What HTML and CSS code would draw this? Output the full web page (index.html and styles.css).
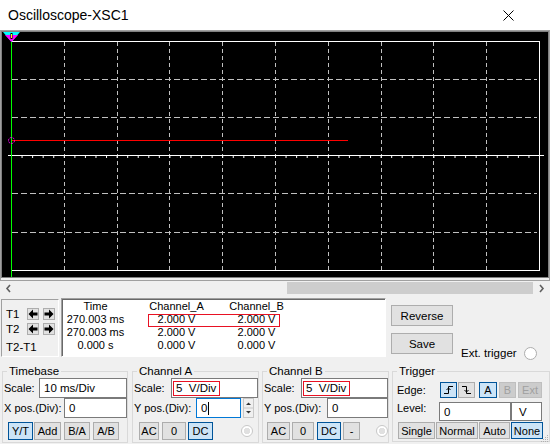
FILE: index.html
```html
<!DOCTYPE html>
<html>
<head>
<meta charset="utf-8">
<title>Oscilloscope-XSC1</title>
<link rel="stylesheet" href="styles.css">
</head>
<body>
<div class="titlebar">
  <span class="title">Oscilloscope-XSC1</span>
  <svg class="close" width="11" height="11" viewBox="0 0 11 11"><path d="M0.5 0.5L10.5 10.5M10.5 0.5L0.5 10.5" stroke="#000" stroke-width="1"/></svg>
</div>

<svg class="scope" viewBox="0 30 550 252" width="550" height="252">
  <rect x="0" y="30" width="550" height="252" fill="#f0f0f0"/>
  <rect x="0.5" y="30.5" width="549" height="250" fill="none" stroke="#a0a0a0"/>
  <rect x="1.5" y="31.5" width="547" height="246" fill="none" stroke="#808080"/>
  <rect x="2" y="32" width="546" height="245" fill="#000"/>
  <path d="M64.5 42V270M117.5 42V270M169.5 42V270M222.5 42V270M275.5 42V270M328.5 42V270M381.5 42V270M433.5 42V270M486.5 42V270" stroke="#c0c0c0" stroke-dasharray="4 3"/>
  <path d="M12 79.5H537M12 117.5H537M12 193.5H537M12 232.5H537" stroke="#c0c0c0" stroke-dasharray="6 3"/>
  <path d="M11 41.5H540M539.5 41V271M11 270.5H540M8 155.5H544" stroke="#fff"/>
  <line x1="11" y1="157" x2="540" y2="157" stroke="#fff" stroke-width="2" stroke-dasharray="1 9.56"/>
  <path d="M11 140.5H348" stroke="#ff0000"/>
  <path d="M11.5 32V277" stroke="#00ff00"/>
  <circle cx="11.5" cy="140.5" r="3" fill="none" stroke="#ff00ff" stroke-dasharray="2 1"/>
  <polygon points="3,32 20,32 11.5,42" fill="#00ffff"/>
  <polygon points="5,35 18,35 11.5,42" fill="#ff00ff"/>
  <rect x="10.5" y="33" width="2" height="6" fill="#000"/>
  <rect x="11" y="34" width="1" height="4" fill="#ffff00"/>
</svg>

<div class="hscroll">
  <div class="sarrow"><svg width="7" height="9" viewBox="0 0 7 9"><path d="M5 1L2 4.5L5 8" fill="none" stroke="#606060" stroke-width="1.6"/></svg></div>
  <div class="strack"></div>
  <div class="sthumb"></div>
  <div class="sarrow"><svg width="7" height="9" viewBox="0 0 7 9"><path d="M2 1L5 4.5L2 8" fill="none" stroke="#606060" stroke-width="1.6"/></svg></div>
</div>

<div class="readout">
  <div class="tbox">
    <div class="trow">
      <span class="tlab">T1</span>
      <div class="abtn"><svg width="10" height="10" viewBox="0 0 10 10"><path d="M0.5 5L5 0.5V3.5H9.5V6.5H5V9.5Z" fill="#000"/></svg></div>
      <div class="abtn"><svg width="10" height="10" viewBox="0 0 10 10"><path d="M9.5 5L5 0.5V3.5H0.5V6.5H5V9.5Z" fill="#000"/></svg></div>
    </div>
    <div class="trow">
      <span class="tlab">T2</span>
      <div class="abtn"><svg width="10" height="10" viewBox="0 0 10 10"><path d="M0.5 5L5 0.5V3.5H9.5V6.5H5V9.5Z" fill="#000"/></svg></div>
      <div class="abtn"><svg width="10" height="10" viewBox="0 0 10 10"><path d="M9.5 5L5 0.5V3.5H0.5V6.5H5V9.5Z" fill="#000"/></svg></div>
    </div>
    <div class="tdiff">T2-T1</div>
  </div>

  <div class="readtable">
    <div class="rrow"><span class="c1">Time</span><span class="c2">Channel_A</span><span class="c3">Channel_B</span></div>
    <div class="rrow"><span class="c1">270.003 ms</span><span class="c2">2.000 V</span><span class="c3">2.000 V</span></div>
    <div class="rrow"><span class="c1">270.003 ms</span><span class="c2">2.000 V</span><span class="c3">2.000 V</span></div>
    <div class="rrow"><span class="c1">0.000 s</span><span class="c2">0.000 V</span><span class="c3">0.000 V</span></div>
    <div class="hl"></div>
  </div>

  <div class="btncol">
    <div class="btn bigbtn">Reverse</div>
    <div class="btn bigbtn save">Save</div>
  </div>

  <div class="ext"><span>Ext. trigger</span><span class="radio ext-radio"></span></div>
</div>

<div class="groups">
  <fieldset class="grp g-time">
    <legend>Timebase</legend>
    <div class="frow r1"><span class="lab">Scale:</span><div class="inp w88 auto">10 ms/Div</div></div>
    <div class="frow r2"><span class="lab">X pos.(Div):</span><div class="inp w63 auto">0</div></div>
    <div class="frow r3 pl5">
      <div class="btn sel w25">Y/T</div>
      <div class="btn w27 ml1">Add</div>
      <div class="btn w26 ml3">B/A</div>
      <div class="btn w26 ml3">A/B</div>
    </div>
  </fieldset>

  <fieldset class="grp g-cha">
    <legend>Channel A</legend>
    <div class="frow r1"><span class="lab">Scale:</span><div class="inp w87 auto"><span class="redbox">5  V/Div</span></div></div>
    <div class="frow r2"><span class="lab lw63">Y pos.(Div):</span><div class="inp w45 focus">0<span class="caret"></span></div>
      <div class="spin"><svg width="11" height="20" viewBox="0 0 11 20"><rect x="0.5" y="0.5" width="10" height="19" fill="#f0f0f0" stroke="#c8c8c8"/><path d="M1 10H10" stroke="#c8c8c8"/><path d="M3 7H8L5.5 4.5Z" fill="#333"/><path d="M3 13H8L5.5 15.5Z" fill="#333"/></svg></div>
    </div>
    <div class="frow r3 pl6">
      <div class="btn w20">AC</div>
      <div class="btn w24 ml3">0</div>
      <div class="btn sel w25 ml2">DC</div>
      <span class="radio dis ml28"></span>
    </div>
  </fieldset>

  <fieldset class="grp g-chb">
    <legend>Channel B</legend>
    <div class="frow r1"><span class="lab">Scale:</span><div class="inp w87 auto"><span class="redbox">5  V/Div</span></div></div>
    <div class="frow r2"><span class="lab">Y pos.(Div):</span><div class="inp w61 auto">0</div></div>
    <div class="frow r3 pl4">
      <div class="btn w23">AC</div>
      <div class="btn w22 ml2">0</div>
      <div class="btn sel w24 ml3">DC</div>
      <div class="btn w17 ml2">-</div>
      <span class="radio dis ml16"></span>
    </div>
  </fieldset>

  <fieldset class="grp g-trig">
    <legend>Trigger</legend>
    <div class="frow t1"><span class="lab tlw">Edge:</span>
      <div class="btn sel w17 eb"><svg width="11" height="10" viewBox="0 0 11 10"><path d="M1 8.5H5.5V1.5H10" fill="none" stroke="#000"/><path d="M3.5 5L5.5 3L7.5 5" fill="none" stroke="#000"/></svg></div>
      <div class="btn w17 ml1 eb"><svg width="11" height="10" viewBox="0 0 11 10"><path d="M1 1.5H5.5V8.5H10" fill="none" stroke="#000"/><path d="M3.5 5L5.5 7L7.5 5" fill="none" stroke="#000"/></svg></div>
      <div class="btn sel w18 ml4">A</div>
      <div class="btn dis w17 ml2">B</div>
      <div class="btn dis w24 ml2">Ext</div>
    </div>
    <div class="frow t2"><span class="lab tlw2">Level:</span><div class="inp w72 h19">0</div><div class="inp w31 h19 vbox">V</div></div>
    <div class="frow t3 pl5">
      <div class="btn w37">Single</div>
      <div class="btn w42 ml1">Normal</div>
      <div class="btn w31 ml1">Auto</div>
      <div class="btn sel w32 ml1">None</div>
    </div>
  </fieldset>
</div>

<svg class="grip" width="9" height="9" viewBox="0 0 9 9"><g fill="#b0b0b0"><rect x="7" y="1" width="1" height="1"/><rect x="5" y="3" width="1" height="1"/><rect x="7" y="3" width="1" height="1"/><rect x="3" y="5" width="1" height="1"/><rect x="5" y="5" width="1" height="1"/><rect x="7" y="5" width="1" height="1"/><rect x="1" y="7" width="1" height="1"/><rect x="3" y="7" width="1" height="1"/><rect x="5" y="7" width="1" height="1"/><rect x="7" y="7" width="1" height="1"/></g></svg>
</body>
</html>
```

FILE: styles.css
```css
* { box-sizing: border-box; }
html, body { margin: 0; padding: 0; }
body {
  width: 550px;
  height: 444px;
  overflow: hidden;
  position: relative;
  background: #f0f0f0;
  font-family: "Liberation Sans", Arial, sans-serif;
  font-size: 11px;
  color: #000;
}

.titlebar {
  height: 30px;
  background: #fff;
  display: flex;
  align-items: center;
  justify-content: space-between;
  padding: 0 36px 0 8px;
}
.title { font-size: 14px; }
.close { display: block; }

.scope { display: block; width: 550px; height: 252px; }

.hscroll { height: 12px; display: flex; }
.sarrow { width: 17px; display: flex; align-items: center; justify-content: center; }
.strack { width: 270px; }
.sthumb { width: 246px; background: #cdcdcd; }

.readout { height: 70px; display: flex; align-items: flex-start; }
.tbox {
  margin: 5px 0 0 1px;
  width: 58px;
  height: 58px;
  border-top: 1px solid #a0a0a0;
  border-left: 1px solid #a0a0a0;
  border-right: 1px solid #fff;
  border-bottom: 1px solid #fff;
  padding: 8px 0 0 4px;
}
.trow { display: flex; align-items: center; height: 12px; }
.trow + .trow { margin-top: 3px; }
.tlab { width: 21px; line-height: 12px; font-size: 11.5px; }
.abtn {
  width: 12px; height: 12px;
  background: #e1e1e1;
  border: 1px solid #adadad;
  display: flex; align-items: center; justify-content: center;
}
.abtn + .abtn { margin-left: 4px; }
.tdiff { margin-top: 6px; line-height: 12px; font-size: 11.5px; }

.readtable {
  position: relative;
  margin: 4px 0 0 2px;
  width: 325px;
  height: 59px;
  background: #fff;
  border-top: 1px solid #a0a0a0;
  border-left: 1px solid #a0a0a0;
  border-right: 1px solid #fff;
  border-bottom: 1px solid #fff;
  box-shadow: inset 1px 1px 0 #696969;
  padding: 1px 0 0 1px;
}
.rrow { display: flex; height: 13px; line-height: 13px; white-space: nowrap; }
.c1 { width: 65px; text-align: center; }
.c2 { width: 97px; text-align: center; }
.c3 { width: 63px; text-align: center; }
.hl {
  position: absolute;
  left: 86px; top: 15px;
  width: 132px; height: 13px;
  border: 1px solid #e81123;
}

.btn {
  height: 100%;
  background: #e1e1e1;
  border: 1px solid #adadad;
  display: flex; align-items: center; justify-content: center;
  white-space: nowrap;
}
.btn.sel { background: #cce4f7; border-color: #005499; }
.btn.dis { background: #cccccc; border-color: #bfbfbf; color: #a0a0a0; }

.btncol { margin: 11px 0 0 5px; display: flex; flex-direction: column; }
.bigbtn { width: 62px; height: 21px; font-size: 11.5px; }
.save { margin-top: 7px; }

.ext { margin: 53px 0 0 8px; display: flex; align-items: center; height: 12px; white-space: nowrap; font-size: 11.5px; }
.radio {
  display: block;
  width: 12px; height: 12px;
  border-radius: 50%;
  border: 1px solid #a0a0a0;
  background: #fff;
  flex: none;
}
.ext-radio { width: 13px; height: 13px; margin-left: 7px; border-color: #adadad; }
.radio.dis { border-color: #c8c8c8; background: radial-gradient(circle, #e0e0e0 0 3px, #fff 3.5px); }

.groups { display: flex; align-items: flex-start; }
.grp {
  margin: 0;
  padding: 0 0 2px 0;
  border: 1px solid #d9d9d9;
  min-width: 0;
}
.grp legend {
  margin-left: 4px;
  padding: 0 2px;
  line-height: 14px;
  font-size: 11.5px;
}
.g-time { margin-left: 2px; width: 126px; }
.g-cha { margin-left: 4px; width: 127px; }
.g-chb { margin-left: 3px; width: 127px; }
.g-trig { margin-left: 3px; width: 158px; }

.frow { display: flex; align-items: center; white-space: nowrap; }
.r1 { height: 20px; }
.r2 { height: 20px; }
.r3 { height: 18px; margin-top: 4px; }
.t1 { height: 16px; margin-top: 4px; }
.t2 { height: 19px; margin-top: 4px; align-items: flex-start; }
.t3 { height: 17px; margin-top: 1px; }

.lab { padding-left: 1px; }
.lw63 { width: 63px; flex: none; }
.tlw { width: 47px; padding-left: 4px; flex: none; }
.tlw2 { width: 46px; padding-left: 4px; flex: none; line-height: 12px; }

.inp {
  height: 20px;
  background: #fff;
  border: 1px solid #7a7a7a;
  padding-left: 4px;
  display: flex; align-items: center;
  font-size: 11.5px;
  flex: none;
}
.inp.focus { border-color: #0078d7; }
.inp.h19 { height: 19px; }
.vbox { padding-left: 7px; }
.auto { margin-left: auto; }
.caret { display: inline-block; width: 1px; height: 13px; background: #000; margin-left: 1px; }
.redbox {
  border: 1px solid #e81123;
  height: 15px;
  line-height: 13px;
  padding: 0 3px 0 2px;
  margin-left: -3px;
  white-space: pre;
}
.spin { margin-left: 2px; display: flex; }
.eb svg { display: block; }

.pl4 { padding-left: 4px; }
.pl5 { padding-left: 5px; }
.pl6 { padding-left: 6px; }
.ml1 { margin-left: 1px; }
.ml2 { margin-left: 2px; }
.ml3 { margin-left: 3px; }
.ml4 { margin-left: 4px; }
.ml16 { margin-left: 16px; }
.ml28 { margin-left: 28px; }

.w17 { width: 17px; flex: none; }
.w18 { width: 18px; flex: none; }
.w20 { width: 20px; flex: none; }
.w22 { width: 22px; flex: none; }
.w23 { width: 23px; flex: none; }
.w24 { width: 24px; flex: none; }
.w25 { width: 25px; flex: none; }
.w26 { width: 26px; flex: none; }
.w27 { width: 27px; flex: none; }
.w31 { width: 31px; flex: none; }
.w32 { width: 32px; flex: none; }
.w37 { width: 37px; flex: none; }
.w42 { width: 42px; flex: none; }
.w45 { width: 45px; flex: none; }
.w61 { width: 61px; flex: none; }
.w63 { width: 63px; flex: none; }
.w72 { width: 72px; flex: none; }
.w87 { width: 87px; flex: none; }
.w88 { width: 88px; flex: none; }

.grip { position: absolute; right: 1px; bottom: 1px; }
```
